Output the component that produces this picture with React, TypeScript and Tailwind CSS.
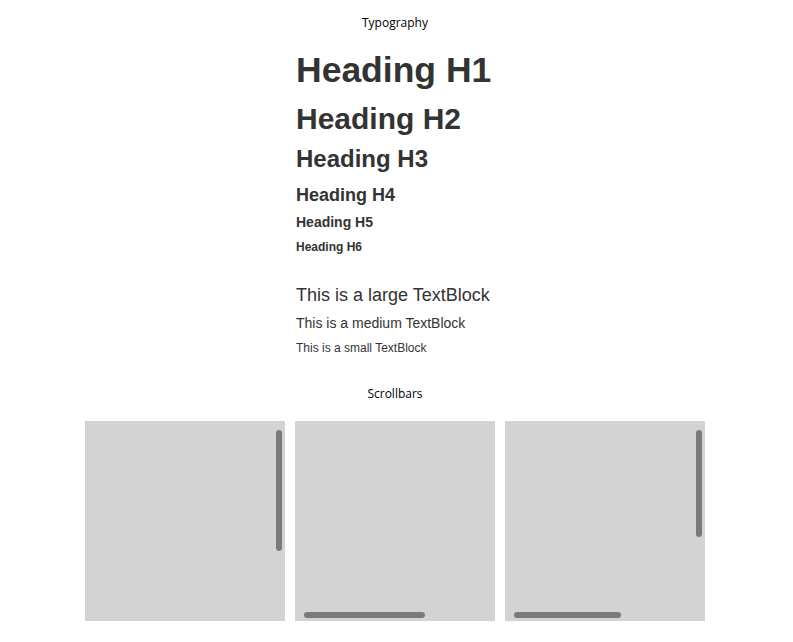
import React from "react";

const arial = { fontFamily: '"Liberation Sans", Arial, sans-serif' };

function Box({ v, h, vh }: { v?: boolean; h?: boolean; vh?: number }) {
  return (
    <div className="relative w-[200px] h-[200px] bg-[#d3d3d3]">
      {v && (
        <div
          className="absolute right-[3px] top-[9px] w-[6px] rounded-full bg-[#7a7a7a]"
          style={{ height: vh }}
        />
      )}
      {h && (
        <div
          className="absolute left-[9px] bottom-[3px] h-[6px] rounded-full bg-[#7a7a7a]"
          style={{ width: vh }}
        />
      )}
    </div>
  );
}

export default function App() {
  return (
    <div className="w-[790px] flex flex-col bg-white pt-[15px] pb-[21px]">
      <div className="text-center text-[12px] leading-[16px] text-black font-['Open_Sans',sans-serif]">
        Typography
      </div>
      <div className="self-center w-[198px] flex flex-col text-[#333333] font-['Liberation_Sans',Arial,sans-serif]">
        <div className="mt-[19px] text-[35.5px] leading-[40px] font-bold whitespace-nowrap">Heading H1</div>
        <div className="mt-[11px] text-[30px] leading-[35px] font-bold whitespace-nowrap">Heading H2</div>
        <div className="mt-[9px] text-[24px] leading-[28px] font-bold whitespace-nowrap">Heading H3</div>
        <div className="mt-[12px] text-[18px] leading-[21px] font-bold whitespace-nowrap">Heading H4</div>
        <div className="mt-[8px] text-[14px] leading-[16px] font-bold whitespace-nowrap">Heading H5</div>
        <div className="mt-[10px] text-[12px] leading-[14px] font-bold whitespace-nowrap">Heading H6</div>
        <div className="mt-[31px] text-[18px] leading-[21px] whitespace-nowrap">This is a large TextBlock</div>
        <div className="mt-[9px] text-[14px] leading-[16px] whitespace-nowrap">This is a medium TextBlock</div>
        <div className="mt-[10px] text-[12px] leading-[14px] whitespace-nowrap">This is a small TextBlock</div>
      </div>
      <div className="mt-[31px] text-center text-[12px] leading-[16px] text-black font-['Open_Sans',sans-serif]">
        Scrollbars
      </div>
      <div className="mt-[19px] flex justify-center gap-[10px]" style={arial}>
        <Box v vh={121} />
        <Box h vh={121} />
        <div className="relative w-[200px] h-[200px] bg-[#d3d3d3]">
          <div className="absolute right-[3px] top-[9px] w-[6px] h-[107px] rounded-full bg-[#7a7a7a]" />
          <div className="absolute left-[9px] bottom-[3px] h-[6px] w-[107px] rounded-full bg-[#7a7a7a]" />
        </div>
      </div>
    </div>
  );
}
